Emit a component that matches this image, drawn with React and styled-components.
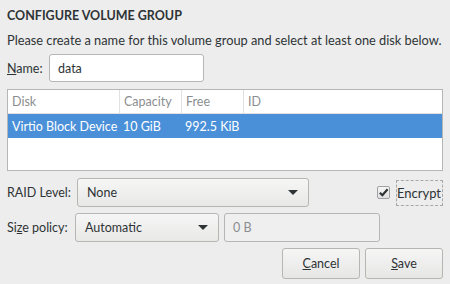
import styled, { createGlobalStyle } from 'styled-components';

const GlobalStyle = createGlobalStyle`
  body {
    margin: 0;
    background: #ededed;
    font-family: Lato, "Open Sans", sans-serif;
    color: #2e3436;
  }
`;

const Dialog = styled.div`
  width: 450px;
  height: 284px;
  box-sizing: border-box;
  padding: 8px 7px 0 7px;
  display: flex;
  flex-direction: column;
  font-size: 12.5px;
`;

const Title = styled.div`
  font-weight: bold;
  font-size: 12.5px;
  line-height: 16px;
  height: 16px;
`;

const Description = styled.div`
  margin-top: 8px;
  line-height: 16px;
  white-space: nowrap;
  font-size: 12.8px;
`;

const Row = styled.div`
  display: flex;
  align-items: center;
  gap: ${(p) => p.gap || 6}px;
  margin-top: ${(p) => p.top || 0}px;
`;

const Label = styled.span`
  width: ${(p) => (p.w ? `${p.w}px` : 'auto')};
  flex-shrink: 0;
`;

const Mn = styled.span`
  text-decoration: underline;
`;

const Entry = styled.div`
  box-sizing: border-box;
  width: ${(p) => p.w}px;
  height: ${(p) => p.h || 28}px;
  border: 1px solid #b6b6b3;
  border-radius: 3px;
  background: ${(p) => (p.disabled ? '#efefef' : '#ffffff')};
  color: ${(p) => (p.disabled ? '#8b8e8f' : '#2e3436')};
  display: flex;
  align-items: center;
  padding-left: 8px;
`;

const Table = styled.div`
  margin-top: 7px;
  box-sizing: border-box;
  height: 82px;
  border: 1px solid #b6b6b3;
  background: #ffffff;
`;

const HeaderRow = styled.div`
  display: grid;
  grid-template-columns: 111px 62px 62px 1fr;
  height: 23px;
  border-bottom: 1px solid #e1e1e1;
  color: #8b8e8f;
`;

const HeaderCell = styled.div`
  display: flex;
  align-items: center;
  padding-left: 4px;
  border-left: ${(p) => (p.first ? 'none' : '1px solid #e1e1e1')};
`;

const DataRow = styled.div`
  display: grid;
  grid-template-columns: 111px 62px 62px 1fr;
  height: 24px;
  background: ${(p) => (p.selected ? '#4a90d9' : 'transparent')};
  color: ${(p) => (p.selected ? '#ffffff' : '#2e3436')};
`;

const Cell = styled.div`
  display: flex;
  align-items: center;
  padding-left: 4px;
  white-space: nowrap;
`;

const Combo = styled.div`
  box-sizing: border-box;
  width: ${(p) => p.w}px;
  height: 29px;
  border: 1px solid #b6b6b3;
  border-radius: 3px;
  background: linear-gradient(#f6f6f6, #e8e8e7);
  display: flex;
  align-items: center;
  justify-content: space-between;
  padding: 0 10px 0 9px;
`;

const Arrow = styled.span`
  width: 0;
  height: 0;
  border-left: 5px solid transparent;
  border-right: 5px solid transparent;
  border-top: 5px solid #2e3436;
`;

const CheckWrap = styled.div`
  margin-left: auto;
  display: flex;
  align-items: center;
  gap: 6px;
`;

const CheckBox = styled.div`
  box-sizing: border-box;
  width: 13px;
  height: 13px;
  border: 1px solid #a1a1a1;
  border-radius: 2px;
  background: linear-gradient(#f6f6f6, #e0e0e0);
  display: flex;
  align-items: center;
  justify-content: center;
`;

const FocusLabel = styled.span`
  border: 1px dashed #a8a8a8;
  height: 26px;
  box-sizing: border-box;
  display: flex;
  align-items: center;
  padding: 0 1px 0 0;
  font-size: 13px;
`;

const ButtonBar = styled.div`
  display: flex;
  justify-content: flex-end;
  gap: 5px;
  margin-top: 6px;
`;

const Button = styled.div`
  box-sizing: border-box;
  width: 78px;
  height: 31px;
  border: 1px solid #b6b6b3;
  border-radius: 3px;
  background: linear-gradient(#f6f6f6, #e6e6e5);
  display: flex;
  align-items: center;
  justify-content: center;
`;

export default function App() {
  return (
    <>
      <GlobalStyle />
      <Dialog>
        <Title>CONFIGURE VOLUME GROUP</Title>
        <Description>
          Please create a name for this volume group and select at least one disk below.
        </Description>
        <Row top={6} gap={6}>
          <Label w={36}>
            <Mn>N</Mn>ame:
          </Label>
          <Entry w={155}>data</Entry>
        </Row>
        <Table>
          <HeaderRow>
            <HeaderCell first>Disk</HeaderCell>
            <HeaderCell>Capacity</HeaderCell>
            <HeaderCell>Free</HeaderCell>
            <HeaderCell>ID</HeaderCell>
          </HeaderRow>
          <DataRow selected>
            <Cell>Virtio Block Device</Cell>
            <Cell>10 GiB</Cell>
            <Cell>992.5 KiB</Cell>
            <Cell />
          </DataRow>
        </Table>
        <Row top={7} gap={6}>
          <Label w={64}>RAID Level:</Label>
          <Combo w={232}>
            <span>None</span>
            <Arrow />
          </Combo>
          <CheckWrap>
            <CheckBox>
              <svg width="11" height="11" viewBox="0 0 12 12">
                <path d="M2 6.2 L4.8 9 L10.5 2.5" fill="none" stroke="#2e3436" strokeWidth="2.4" />
              </svg>
            </CheckBox>
            <FocusLabel>Encrypt</FocusLabel>
          </CheckWrap>
        </Row>
        <Row top={6} gap={5}>
          <Label w={63}>
            Si<Mn>z</Mn>e policy:
          </Label>
          <Combo w={144}>
            <span>Automatic</span>
            <Arrow />
          </Combo>
          <Entry w={156} h={29} disabled>
            0 B
          </Entry>
        </Row>
        <ButtonBar>
          <Button>
            <span>
              <Mn>C</Mn>ancel
            </span>
          </Button>
          <Button>
            <span>
              <Mn>S</Mn>ave
            </span>
          </Button>
        </ButtonBar>
      </Dialog>
    </>
  );
}
